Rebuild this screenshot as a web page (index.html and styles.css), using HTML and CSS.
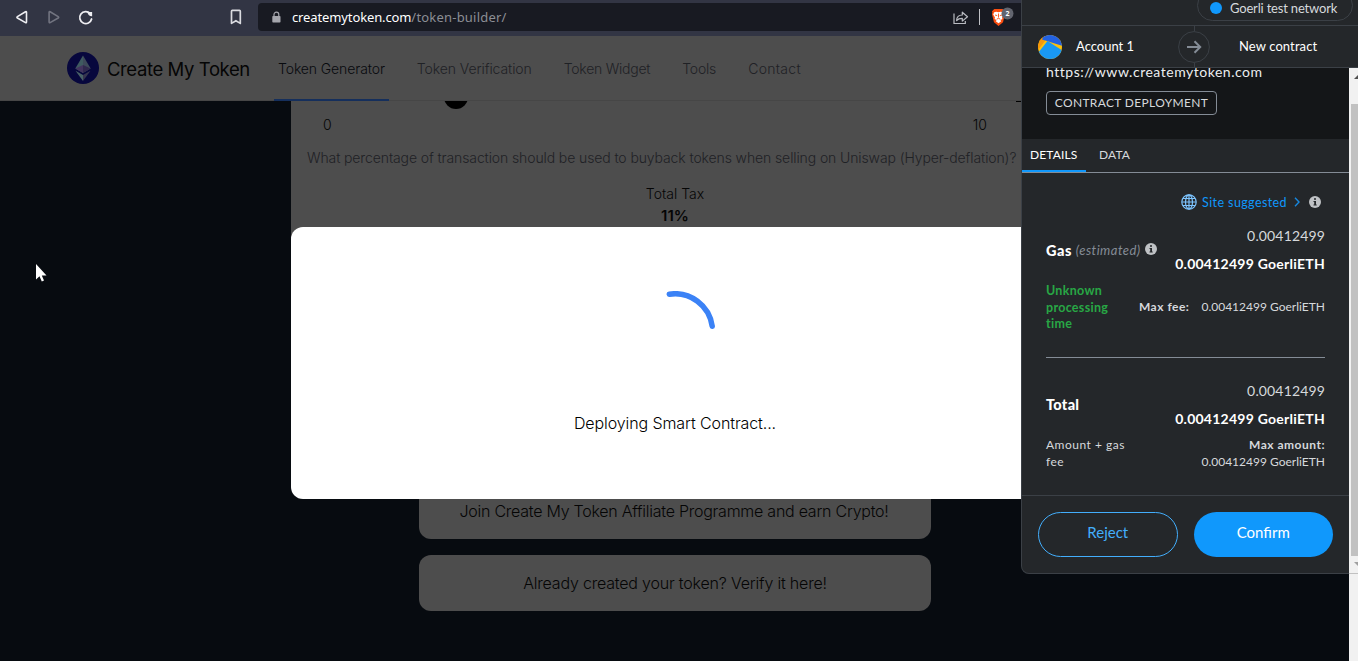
FILE: index.html
```html
<!DOCTYPE html>
<html lang="en">
<head>
<meta charset="utf-8">
<title>Create My Token</title>
<link rel="stylesheet" href="styles.css">
</head>
<body>
<div class="toolbar">
  <div class="nav-buttons">
    <svg width="90" height="24" viewBox="0 0 90 24" fill="none" stroke-width="1.6" stroke-linejoin="round" stroke-linecap="round">
      <path d="M11.5 6.3v9.8q0 1.1-1 .5L2.4 12q-1-.7 0-1.4l8.1-4.9q1-.5 1 .6z" stroke="#eeeef2"/>
      <path d="M34.1 6.3v9.8q0 1.1 1 .5l8.1-4.6q1-.7 0-1.4l-8.1-4.9q-1-.5-1 .6z" stroke="#727480"/>
      <path d="M75.200 7.500A6 6 0 1 0 76.600 13" stroke="#eeeef2" stroke-width="1.800"/>
      <path d="M72.300 6h4.800v4.300q-3.500.4-4.800-4.300z" fill="#eeeef2"/>
    </svg>
  </div>
  <svg class="bookmark" width="12" height="16" viewBox="0 0 12 16" fill="none" stroke="#dadbe0" stroke-width="1.700" stroke-linejoin="round"><path d="M1.500 2.200q0-.8.8-.8h7.200q.8 0 .8.800v12.200l-4.400-2.700-4.400 2.700z"/></svg>
  <div class="address">
    <svg class="lock" width="9" height="12" viewBox="0 0 9 12"><path d="M2 6V3.500a2.400 2.400 0 0 1 4.800 0V6" fill="none" stroke="#a5a6ad" stroke-width="1.200"/><rect x=".3" y="5" width="8.200" height="6.600" rx=".8" fill="#a5a6ad"/></svg>
    <span class="domain">createmytoken.com</span><span class="path">/token-builder/</span>
    <svg class="share" width="16" height="16" viewBox="0 0 16 16" fill="none" stroke="#b9bbc1" stroke-width="1.200"><path d="M1 4.500v10h11.300v-2.600"/><path d="M3.600 11.500c0-3.600 2.200-5.500 5.700-5.500V3.200l5.200 4.500-5.200 4.400V9.300c-2.500 0-4.200.4-5.700 2.200z" stroke-linejoin="round"/></svg>
    <span class="sep"></span>
    <svg class="shield" width="24" height="20" viewBox="0 0 24 20">
      <path d="M3.300 2h8.400l2.300 2.400-.4 1.400.4 1.200-2 8.200L7.500 19 3 15.200.9 7l.5-1.400L1 4.300z" fill="#fb4f11"/>
      <path d="M3.200 5.200l2-.5 2.300.6 2.300-.6 2 .5 1 2.200-1.800 3 .4 1.500-2 1 .8 1.300-2.700 2-2.700-2 .8-1.300-2-1 .4-1.500-1.800-3z" fill="#fff"/>
      <path d="M4 8l2.200.6M11 8l-2.200.6M7.500 6.500v4M5.700 12.200l1.800-.9 1.800.9" stroke="#fb4f11" stroke-width=".9" fill="none"/>
      <circle cx="16.500" cy="6.500" r="6" fill="#62656f"/>
      <text x="16.500" y="9" class="shield-count">2</text>
    </svg>
  </div>
</div>

<header class="site-header">
  <svg class="logo" width="32" height="32" viewBox="0 0 32 32">
    <circle cx="16" cy="16" r="16" fill="#07073d"/>
    <path d="M16 3.500L8.300 16.500 16 21z" fill="#3f5a60"/><path d="M16 3.500l7.700 13L16 21z" fill="#3e4a5a"/>
    <path d="M16 13l-7.700 3.500L16 21z" fill="#43345e"/><path d="M16 13l7.700 3.500L16 21z" fill="#30284e"/>
    <path d="M8.500 18.700L16 23v6z" fill="#496166"/><path d="M23.500 18.700L16 23v6z" fill="#36354f"/>
  </svg>
  <span class="brand">Create My Token</span>
  <nav class="menu">
    <a class="active"><span class="t1">Token Generator</span></a>
    <a><span class="t2">Token Verification</span></a>
    <a><span class="t3">Token Widget</span></a>
    <a><span class="t4">Tools</span></a>
    <a><span class="t5">Contact</span></a>
  </nav>
</header>

<main class="page">
  <section class="form-card">
    <div class="slider"><span class="knob"></span><span class="track-end"></span></div>
    <div class="range"><span>0</span><span>10</span></div>
    <p class="hint">What percentage of transaction should be used to buyback tokens when selling on Uniswap (Hyper-deflation)?</p>
    <p class="tax-label">Total Tax</p>
    <p class="tax-value">11%</p>
  </section>
  <a class="promo"><span class="p1">Join Create My Token Affiliate Programme and earn Crypto!</span></a>
  <a class="promo"><span class="p2">Already created your token? Verify it here!</span></a>
</main>

<div class="modal">
  <svg class="spinner" width="80" height="80" viewBox="0 0 80 80" fill="none"><path d="M34.300 3.200A37.500 37.500 0 0 1 77.200 35.200" stroke="#3b82f6" stroke-width="5.500" stroke-linecap="round"/></svg>
  <p class="status">Deploying Smart Contract...</p>
</div>

<div class="scrollbar"><span class="up"></span><span class="thumb"></span><span class="down"></span></div>

<aside class="wallet">
  <div class="network-row"><div class="network"><span class="dot"></span><span class="net-name">Goerli test network</span></div></div>
  <div class="accounts">
    <svg class="avatar" width="24" height="24" viewBox="0 0 24 24"><defs><clipPath id="av"><circle cx="12" cy="12" r="12"/></clipPath></defs><g clip-path="url(#av)"><rect width="24" height="24" fill="#fcc10c"/><path d="M0 0h7v6l-7 9z" fill="#f6980b"/><path d="M4 4.500L7-2h19v13.500z" fill="#2362e1"/><path d="M9.500 6L25 16v9H3L0 18z" fill="#1998f3"/></g></svg>
    <span class="acct">Account 1</span>
    <span class="arrow"><svg width="32" height="32" viewBox="0 0 32 32" fill="none"><circle cx="16" cy="16" r="15.400" stroke="#3b4046"/><path d="M9 16h13M16.500 10.300l5.700 5.700-5.700 5.700" stroke="#848c96" stroke-width="2"/></svg></span>
    <span class="contract">New contract</span>
  </div>
  <div class="origin">
    <div class="origin-url">https://www.createmytoken.com</div>
    <div class="tag"><span>CONTRACT DEPLOYMENT</span></div>
  </div>
  <div class="tabs"><span class="tab on"><span class="tb1">DETAILS</span></span><span class="tab"><span class="tb2">DATA</span></span></div>
  <div class="details">
    <div class="suggested">
      <svg width="16" height="16" viewBox="0 0 16 16" fill="none" stroke="#7dc4ff" stroke-width="1.200"><circle cx="8" cy="8" r="7.200"/><ellipse cx="8" cy="8" rx="3.500" ry="7.200"/><path d="M8 1v14M1 8h14M2 4.500h12M2 11.500h12"/></svg>
      <span class="site">Site suggested</span>
      <svg class="chev" width="6" height="10" viewBox="0 0 6 10" fill="none" stroke="#1788df" stroke-width="1.400"><path d="M1 .8L5 5 1 9.200"/></svg>
      <svg width="12" height="12" viewBox="0 0 12 12"><circle cx="6" cy="6" r="6" fill="#bfc2c5"/><path d="M5 2.200h2v1.600H5zM4.500 5H7v3.600h.7v1H4.500v-1h.7V6h-.7z" fill="#24272a"/></svg>
    </div>
    <div class="row gas">
      <div class="gas-name"><b class="g1">Gas</b><i>(estimated)</i><svg width="12" height="12" viewBox="0 0 12 12"><circle cx="6" cy="6" r="6" fill="#bfc2c5"/><path d="M5 2.200h2v1.600H5zM4.500 5H7v3.600h.7v1H4.500v-1h.7V6h-.7z" fill="#24272a"/></svg></div>
      <div class="amounts"><div class="num">0.00412499</div><div class="eth">0.00412499 GoerliETH</div></div>
    </div>
    <div class="row fee">
      <div class="timing">Unknown<br>processing<br>time</div>
      <div class="maxfee"><b class="mf">Max fee:</b><span class="small-eth">0.00412499 GoerliETH</span></div>
    </div>
    <div class="rule"></div>
    <div class="row total">
      <b class="total-name">Total</b>
      <div class="amounts"><div class="num">0.00412499</div><div class="eth">0.00412499 GoerliETH</div></div>
    </div>
    <div class="row subtotal">
      <div class="amount-gas">Amount + gas<br>fee</div>
      <div class="maxamount"><b class="ma">Max amount:</b><span class="small-eth">0.00412499 GoerliETH</span></div>
    </div>
  </div>
  <div class="actions"><button class="reject"><span>Reject</span></button><button class="confirm"><span>Confirm</span></button></div>
</aside>

<svg class="cursor" width="14" height="20" viewBox="0 0 14 20"><path d="M1 1v15.500l3.500-3.300 2.300 5.300 2.200-1-2.200-5h4.700z" fill="#fff"/></svg>
</body>
</html>
```
FILE: styles.css
```css
* { box-sizing: border-box; }
body { margin: 0; width: 1358px; height: 661px; overflow: hidden; position: relative; background: #070b10; font-family: Inter, "Liberation Sans", sans-serif; font-weight: 300; color: #050505; }
p { margin: 0; }
svg { display: block; flex: none; }
span, b, i { white-space: nowrap; }

.toolbar { height: 36px; background: #323544; display: flex; align-items: center; }
.nav-buttons { width: 230px; padding-left: 15px; }
.nav-buttons svg { margin-top: -1px; }
.bookmark { margin-top: -2px; }
.address { margin: -2px 0 0 16px; width: 790px; height: 28px; background: #181a22; border-radius: 4px; display: flex; align-items: center; padding-left: 14px; font: 400 13px "Noto Sans", sans-serif; }
.lock { margin-right: 11px; }
.domain { color: #fff; letter-spacing: -.12px; }
.path { color: #8c8e95; width: 542px; letter-spacing: .2px; }
.sep { width: 1px; height: 16px; background: #bfc0c5; margin: 0 11px 0 10px; }
.shield-count { font: 700 7px "Noto Sans", sans-serif; fill: #fff; text-anchor: middle; }

.site-header { height: 65px; background: #4d4d4d; border-bottom: 1px solid #464646; display: flex; align-items: center; padding-left: 67px; }
.brand { margin: 2px 0 0 8px; width: 167px; font-size: 18.500px; font-weight: 400; letter-spacing: -.4px; }
.menu { display: flex; height: 65px; align-self: flex-start; gap: 24px; font-size: 14px; color: #1f2125; }
.menu a { padding: 2px 4px 0; display: flex; align-items: center; border-bottom: 2px solid transparent; }
.menu .active { border-color: #152f5c; color: #080a0e; }
.t1 { letter-spacing: -.11px; }
.t2 { letter-spacing: -.09px; }
.t3 { letter-spacing: -.24px; }
.t4 { letter-spacing: -.2px; }
.t5 { letter-spacing: .3px; }

.page { display: flex; flex-direction: column; align-items: center; padding-right: 8px; }
.form-card { width: 768px; height: 366px; background: #4d4d4d; margin-bottom: 16px; padding: 0 16px; text-align: center; }
.slider { height: 14px; display: flex; justify-content: space-between; overflow: hidden; margin-right: -16px; }
.knob { width: 24px; height: 24px; border-radius: 50%; background: #000; margin: -16px 0 0 137px; }
.track-end { width: 43px; height: 1px; background: #000; }
.range { display: flex; justify-content: space-between; font-size: 14px; padding: 0 56px 0 16px; line-height: 20px; }
.hint { margin-top: 13px; font-size: 14px; line-height: 20px; color: #1f2125; white-space: nowrap; text-align: left; letter-spacing: -.11px; }
.tax-label { margin-top: 15px; line-height: 22px; font-size: 14px; }
.tax-value { line-height: 22px; font-size: 15px; font-weight: 600; }
.promo { width: 512px; height: 56px; border-radius: 12px; background: #4d4d4d; margin-bottom: 16px; display: flex; align-items: center; justify-content: center; font-size: 16px; }
.p1 { letter-spacing: -.25px; margin-right: 2px; }
.p2 { letter-spacing: -.19px; }

.modal { position: absolute; left: 291px; top: 227px; width: 768px; height: 272px; border-radius: 12px; background: #fff; padding-top: 64px; display: flex; flex-direction: column; align-items: center; }
.status { margin-top: 40px; font-size: 16px; line-height: 24px; color: #000; letter-spacing: -.1px; }

.scrollbar { position: absolute; left: 1349px; top: 68px; width: 9px; height: 593px; background: #f1f1f1; z-index: 3; display: flex; flex-direction: column; align-items: flex-end; }
.up { width: 0; height: 0; border: 4px solid transparent; border-bottom-color: #505050; border-top: 0; margin: 7px -4px 25px 0; }
.thumb { width: 7px; height: 452px; background: #c1c1c1; }
.down { width: 9px; height: 18px; border-bottom: 1px solid #c1c1c1; display: flex; justify-content: flex-end; }
.down::after { content: ""; width: 0; height: 0; border: 4px solid transparent; border-top-color: #a0a0a0; border-bottom: 0; margin: 6px -4px 0 0; }

.wallet { position: absolute; left: 1021px; top: 0; width: 345px; height: 574px; background: #24272a; border: 1px solid #3b4046; border-top: 0; border-radius: 0 0 0 8px; color: #d6d9dc; font-family: Lato, sans-serif; font-weight: 400; z-index: 2; }
.network-row { height: 26px; border-bottom: 1px solid #3b4046; display: flex; align-items: flex-end; padding: 0 0 4px 175px; }
.network { width: 156px; height: 31px; flex: none; border: 1px solid #3b4046; border-radius: 16px; display: flex; align-items: center; padding-left: 12px; gap: 8px; font-size: 13px; letter-spacing: -.18px; }
.net-name { margin-top: 5px; line-height: 15px; }
.dot { width: 12px; height: 12px; border-radius: 50%; background: #1098fc; margin-top: 5px; }
.accounts { height: 42px; border-bottom: 1px solid #3b4046; display: flex; align-items: center; padding-left: 16px; font-size: 13px; color: #fff; }
.acct { margin: -2px 0 0 14px; width: 102px; }
.arrow { width: 32px; height: 41px; display: flex; align-items: center; background: linear-gradient(#3b4046, #3b4046) 16px 0 / 1px 5px no-repeat, linear-gradient(#3b4046, #3b4046) 16px 37px / 1px 4px no-repeat; }
.contract { margin: -2px 0 0 29px; letter-spacing: .1px; }
.origin { width: 327px; height: 71px; background: #141618; padding-left: 24px; overflow: hidden; }
.origin-url { line-height: 18px; margin-top: -5px; font-size: 14px; color: #eceef0; letter-spacing: .52px; }
.tag { width: 171px; height: 24px; margin-top: 10px; border: 1px solid #848c96; border-radius: 4px; display: flex; align-items: center; justify-content: center; font-size: 12px; letter-spacing: .34px; padding-bottom: 2px; }
.tabs { width: 327px; height: 34px; border-bottom: 1px solid #848c96; display: flex; font-size: 12px; }
.tab { height: 33px; padding: 0 13px 2px; display: flex; align-items: center; letter-spacing: .15px; }
.tab.on { padding: 0 8px; width: 64px; border-bottom: 2px solid #1098fc; color: #fff; }
.details { width: 327px; height: 322px; padding: 21px 24px 0; }
.suggested { height: 16px; display: flex; align-items: center; justify-content: flex-end; padding-right: 4px; color: #1098fc; font-size: 12.500px; }
.site { margin: 0 7px 0 5px; letter-spacing: .4px; }
.chev { margin-right: 9px; }
.row { display: flex; justify-content: space-between; align-items: center; }
.gas { height: 56px; margin-top: 12px; }
.gas-name { display: flex; align-items: center; font-size: 14px; color: #fff; }
.gas-name b { font-size: 14.500px; font-weight: 900; letter-spacing: .5px; }
.gas-name svg { margin-top: -2px; }
.gas-name i { margin: 0 4px; font-size: 13px; color: #848c96; letter-spacing: .45px; }
.amounts { text-align: right; line-height: 28px; font-size: 14px; }
.num { letter-spacing: .15px; }
.eth { font-weight: 700; color: #fff; letter-spacing: .25px; }
.fee { height: 50px; margin-top: 5px; }
.timing { color: #28a745; font-size: 12.500px; font-weight: 700; line-height: 16.500px; letter-spacing: .3px; }
.maxfee { display: flex; font-size: 12px; gap: 12px; margin-top: -3px; }
.mf, .ma { letter-spacing: .5px; }
.rule { height: 1px; background: #848c96; margin-top: 24px; }
.total { height: 56px; margin-top: 19px; }
.total-name { font-size: 14.500px; font-weight: 900; color: #fff; margin-top: -1px; letter-spacing: .3px; }
.subtotal { font-size: 12px; line-height: 17px; margin-top: 3px; }
.amount-gas { letter-spacing: .5px; }
.maxamount { display: flex; flex-direction: column; align-items: flex-end; }
.actions { width: 327px; height: 78px; border-top: 1px solid #3b4046; padding: 16px 16px 0; display: flex; gap: 16px; }
.actions button { height: 45px; width: 140px; border-radius: 23px; font: 400 15px Lato, sans-serif; padding: 0 0 5px; }
.reject { background: none; border: 1px solid #43aefc; color: #43aefc; }
.confirm { background: #1098fc; border: 0; color: #fff; }

.cursor { position: absolute; left: 35px; top: 263px; z-index: 4; }
```
